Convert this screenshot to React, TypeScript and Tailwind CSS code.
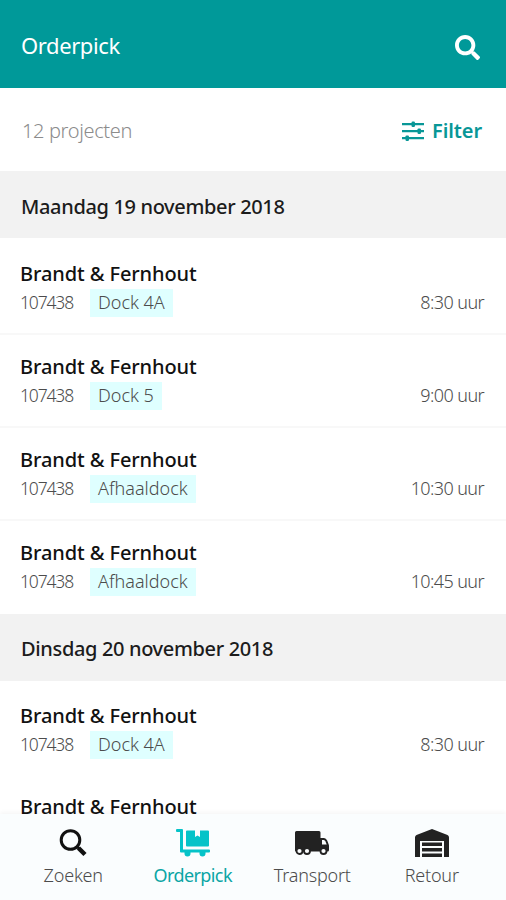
import React from 'react'
import { FaSearch } from 'react-icons/fa'

type Project = { dock: string; time: string }

const monday: Project[] = [
    { dock: 'Dock 4A', time: '8:30 uur' },
    { dock: 'Dock 5', time: '9:00 uur' },
    { dock: 'Afhaaldock', time: '10:30 uur' },
    { dock: 'Afhaaldock', time: '10:45 uur' },
]

const tuesday: Project[] = [
    { dock: 'Dock 4A', time: '8:30 uur' },
]

function FilterIcon() {
    return (
        <svg width="22" height="20" viewBox="0 0 22 20" fill="currentColor">
            <path d="M0 2h22v2.300H0zM0 9h22v2.300H0zM0 16h22v2.300H0z" />
            <rect x="9.500" y="0.500" width="3.500" height="5.500" rx="1.200" />
            <rect x="15.500" y="7.400" width="3.500" height="5.500" rx="1.200" />
            <rect x="3.500" y="14.400" width="3.500" height="5.500" rx="1.200" />
        </svg>
    )
}

function SearchIcon() {
    return (
        <svg width="28" height="28" viewBox="0 0 28 28" fill="none" stroke="#111">
            <circle cx="11.500" cy="11" r="9.300" strokeWidth="3" />
            <path d="M18 17.500l2.500 2.500" strokeWidth="2.500" />
            <path d="M19.500 19l6.500 6.500" strokeWidth="4.500" />
        </svg>
    )
}

function DollyIcon() {
    return (
        <svg width="34" height="28" viewBox="0 0 34 28" fill="currentColor">
            <path d="M1 0h5a1 1 0 0 1 1 1v19.500h26a1 1 0 0 1 1 1v1a1 1 0 0 1-1 1H5a1 1 0 0 1-1-1V3H1a1 1 0 0 1-1-1V1a1 1 0 0 1 1-1z" />
            <path d="M8.500 23h6v1.500a3 3 0 0 1-6 0zM23.500 23h6v1.500a3 3 0 0 1-6 0z" />
            <path d="M11 1.500h8V8l2.500-1.500L24 8V1.500h8a1 1 0 0 1 1 1v14a1 1 0 0 1-1 1H11a1 1 0 0 1-1-1v-14a1 1 0 0 1 1-1z" />
        </svg>
    )
}

function TruckIcon() {
    return (
        <svg width="34" height="24" viewBox="0 0 34 24" fill="currentColor">
            <path d="M1.500 0H24a1.500 1.500 0 0 1 1.500 1.500V7H29q2 0 3.200 2.500l1.300 3.500q.5 1 .5 2v4q0 1.500-1.500 1.500H1q-1 0-1-1v-18A1.500 1.500 0 0 1 1.500 0z" />
            <path d="M27 9h1.800q1 0 1.700 1.500l1.200 3H27z" fill="#fafdfe" />
            <g fill="#fafdfe" stroke="currentColor" strokeWidth="1.800">
                <circle cx="4.500" cy="20" r="3" />
                <circle cx="12" cy="20" r="3" />
                <circle cx="28.500" cy="20" r="3" />
            </g>
        </svg>
    )
}

function WarehouseIcon() {
    return (
        <svg width="34" height="28" viewBox="0 0 34 28" fill="currentColor">
            <path d="M17 0 32.500 6Q34 6.700 34 8.500V28h-5V12H5v16H0V8.500Q0 6.700 1.500 6z" />
            <path d="M7 13.500h20v3.500H7zM7 19h20v3.500H7zM7 24.500h20V28H7z" />
        </svg>
    )
}

function DayHeader({ children }: { children: React.ReactNode }) {
    return (
        <h2 className="flex h-[67px] items-center bg-[#f2f2f2] px-[21px] pt-1 text-[20px] font-medium tracking-[-0.35px] text-[#1c1c1c]">
            <span>{children}</span>
        </h2>
    )
}

function ProjectRow({ dock, time }: Project) {
    return (
        <li className="h-[93px] border-b-2 border-[#f8f8f8] px-5 pt-[17px] last:border-white">
            <h3 className="text-[20px] leading-[30px] font-medium tracking-[-0.1px] text-[#111]">Brandt &amp; Fernhout</h3>
            <div className="flex h-7 items-center text-[18px] font-light text-[#4c4c4c]">
                <span className="w-[54px] text-[17.500px] tracking-[-1.150px]">107438</span>
                <span className="ml-4 flex h-7 items-center bg-[#dfffff] px-2">{dock}</span>
                <span className="ml-auto pr-0.5 tracking-[-0.6px]">{time}</span>
            </div>
        </li>
    )
}

function NavItem({ icon, label, active }: { icon: React.ReactNode; label: string; active?: boolean }) {
    return (
        <a className={active ? 'flex w-[119.5px] flex-col items-center text-[#05c3c8]' : 'flex w-[119.5px] flex-col items-center text-[#222]'}>
            <span className="flex h-7 items-center">{icon}</span>
            <span className={active ? 'mt-1 text-[18px] leading-7 tracking-[-0.6px] text-[#0ba5a5]' : 'mt-1 text-[18px] leading-7 font-light tracking-[-0.2px] text-[#4c4c4c]'}>{label}</span>
        </a>
    )
}

export default function App() {
    return (
        <div className="flex h-[900px] w-[506px] flex-col overflow-hidden bg-white font-['Noto_Sans',sans-serif]">
            <header className="flex h-22 shrink-0 items-center justify-between bg-[#009999] pt-1.5 pr-[26px] pl-[21px] text-white">
                <h1 className="pb-1 text-[22px] tracking-[-0.4px]">Orderpick</h1>
                <FaSearch size={25} />
            </header>

            <div className="flex h-[83px] shrink-0 items-center justify-between pt-[3px] pr-6 pl-[22px]">
                <span className="text-[20px] font-light tracking-[-0.35px] text-[#8c8c8c]">12 projecten</span>
                <button className="flex items-center gap-2 text-[20px] font-semibold tracking-[-0.1px] text-[#089797]">
                    <FilterIcon />
                    <span>Filter</span>
                </button>
            </div>

            <main className="min-h-0 flex-1">
                <DayHeader>Maandag 19 november 2018</DayHeader>
                <ul className="pt-[3.5px]">
                    {monday.map((p, i) => <ProjectRow key={i} {...p} />)}
                </ul>
                <DayHeader>Dinsdag 20 november 2018</DayHeader>
                <ul className="pt-[3px]">
                    {tuesday.map((p, i) => <ProjectRow key={i} {...p} />)}
                </ul>
                <h3 className="px-5 pt-[15px] text-[20px] leading-[30px] font-medium tracking-[-0.1px] text-[#111]">Brandt &amp; Fernhout</h3>
            </main>

            <nav className="flex h-[86px] shrink-0 justify-center bg-[#fafdfe] pt-[15px] pr-px shadow-[0_-2px_4px_rgba(0,0,0,0.04)]">
                <NavItem icon={<SearchIcon />} label="Zoeken" />
                <NavItem icon={<DollyIcon />} label="Orderpick" active />
                <NavItem icon={<TruckIcon />} label="Transport" />
                <NavItem icon={<WarehouseIcon />} label="Retour" />
            </nav>
        </div>
    )
}
